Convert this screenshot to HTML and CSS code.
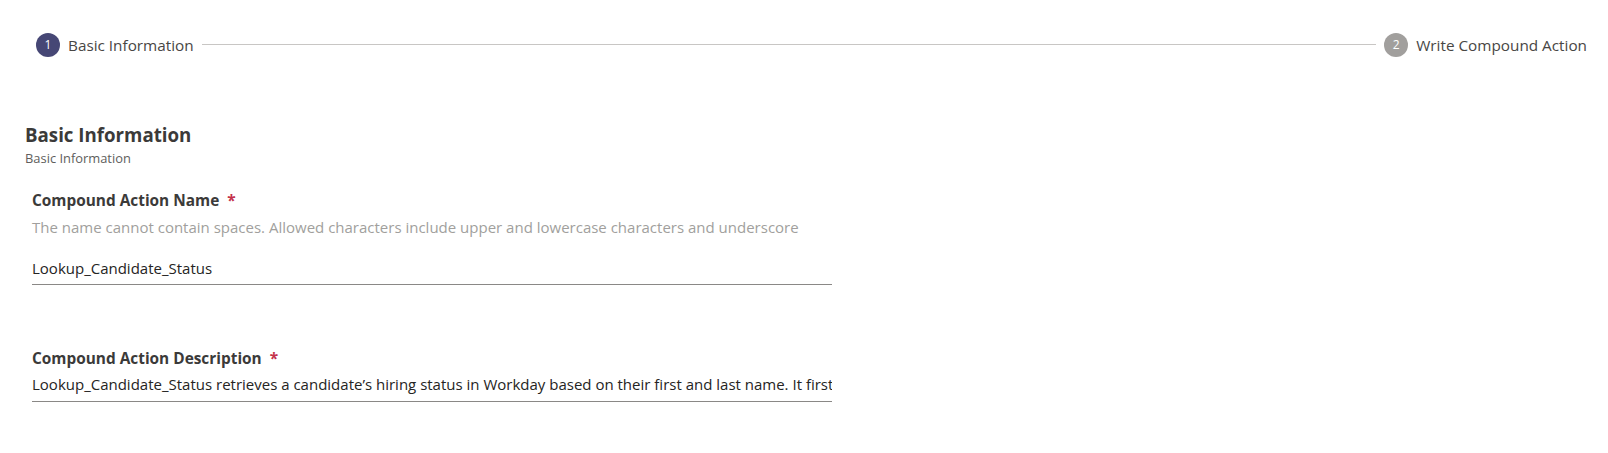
FILE: index.html
```html
<!DOCTYPE html>
<html lang="en">
<head>
<meta charset="utf-8">
<title>Compound Action</title>
<link rel="stylesheet" href="styles.css">
</head>
<body>
  <div class="stepper">
    <div class="step step-active">
      <span class="step-num">1</span>
      <span class="step-label">Basic Information</span>
    </div>
    <div class="step-line"></div>
    <div class="step">
      <span class="step-num">2</span>
      <span class="step-label">Write Compound Action</span>
    </div>
  </div>

  <section class="section">
    <h2 class="section-title">Basic Information</h2>
    <div class="section-sub">Basic Information</div>

    <div class="field field-name">
      <div class="field-label">Compound Action Name <span class="req">*</span></div>
      <div class="field-help">The name cannot contain spaces. Allowed characters include upper and lowercase characters and underscore</div>
      <div class="field-input">Lookup_Candidate_Status</div>
    </div>

    <div class="field field-desc">
      <div class="field-label">Compound Action Description <span class="req">*</span></div>
      <div class="field-input field-input-desc">Lookup_Candidate_Status retrieves a candidate’s hiring status in Workday based on their first and last name. It first searches for the candidate and then returns their current status.</div>
    </div>
  </section>
</body>
</html>
```

FILE: styles.css
```css
html, body {
  margin: 0;
  padding: 0;
  background: #ffffff;
}

body {
  font-family: "Open Sans", "Noto Sans", sans-serif;
  color: #252423;
}

.stepper {
  display: flex;
  align-items: center;
  padding: 33px 21px 0 36px;
}

.step {
  display: flex;
  align-items: center;
  gap: 8px;
  flex: none;
}

.step-num {
  width: 24px;
  height: 24px;
  border-radius: 50%;
  background: #a19f9d;
  color: #ffffff;
  font-size: 12px;
  line-height: 24px;
  text-align: center;
}

.step-active .step-num {
  background: #464775;
}

.step-label {
  font-size: 15.3px;
  line-height: 24px;
  color: #484644;
}

.step-line {
  flex: 1;
  height: 1px;
  background: #c8c6c4;
  margin: 0 8px;
  position: relative;
  top: -1px;
}

.section {
  padding: 65px 0 0 25px;
}

.section-title {
  margin: 0;
  font-size: 18.7px;
  line-height: 26px;
  font-weight: 700;
  color: #3b3a39;
}

.section-sub {
  margin-top: 2px;
  font-size: 12.9px;
  line-height: 16px;
  color: #605e5c;
}

.field {
  margin-left: 7px;
  width: 800px;
}

.field-name {
  margin-top: 25px;
}

.field-desc {
  margin-top: 64px;
}

.field-label {
  font-size: 15.4px;
  line-height: 20px;
  font-weight: 700;
  color: #3b3a39;
}

.req {
  color: #c4314b;
  margin-left: 4px;
}

.field-help {
  margin-top: 6px;
  font-size: 15px;
  line-height: 20px;
  color: #a19f9d;
}

.field-input {
  margin-top: 21px;
  font-size: 15px;
  line-height: 20px;
  color: #252423;
  padding-bottom: 6px;
  border-bottom: 1px solid #8a8886;
  white-space: nowrap;
  overflow: hidden;
}

.field-input-desc {
  margin-top: 5px;
  padding-bottom: 7px;
}
```
